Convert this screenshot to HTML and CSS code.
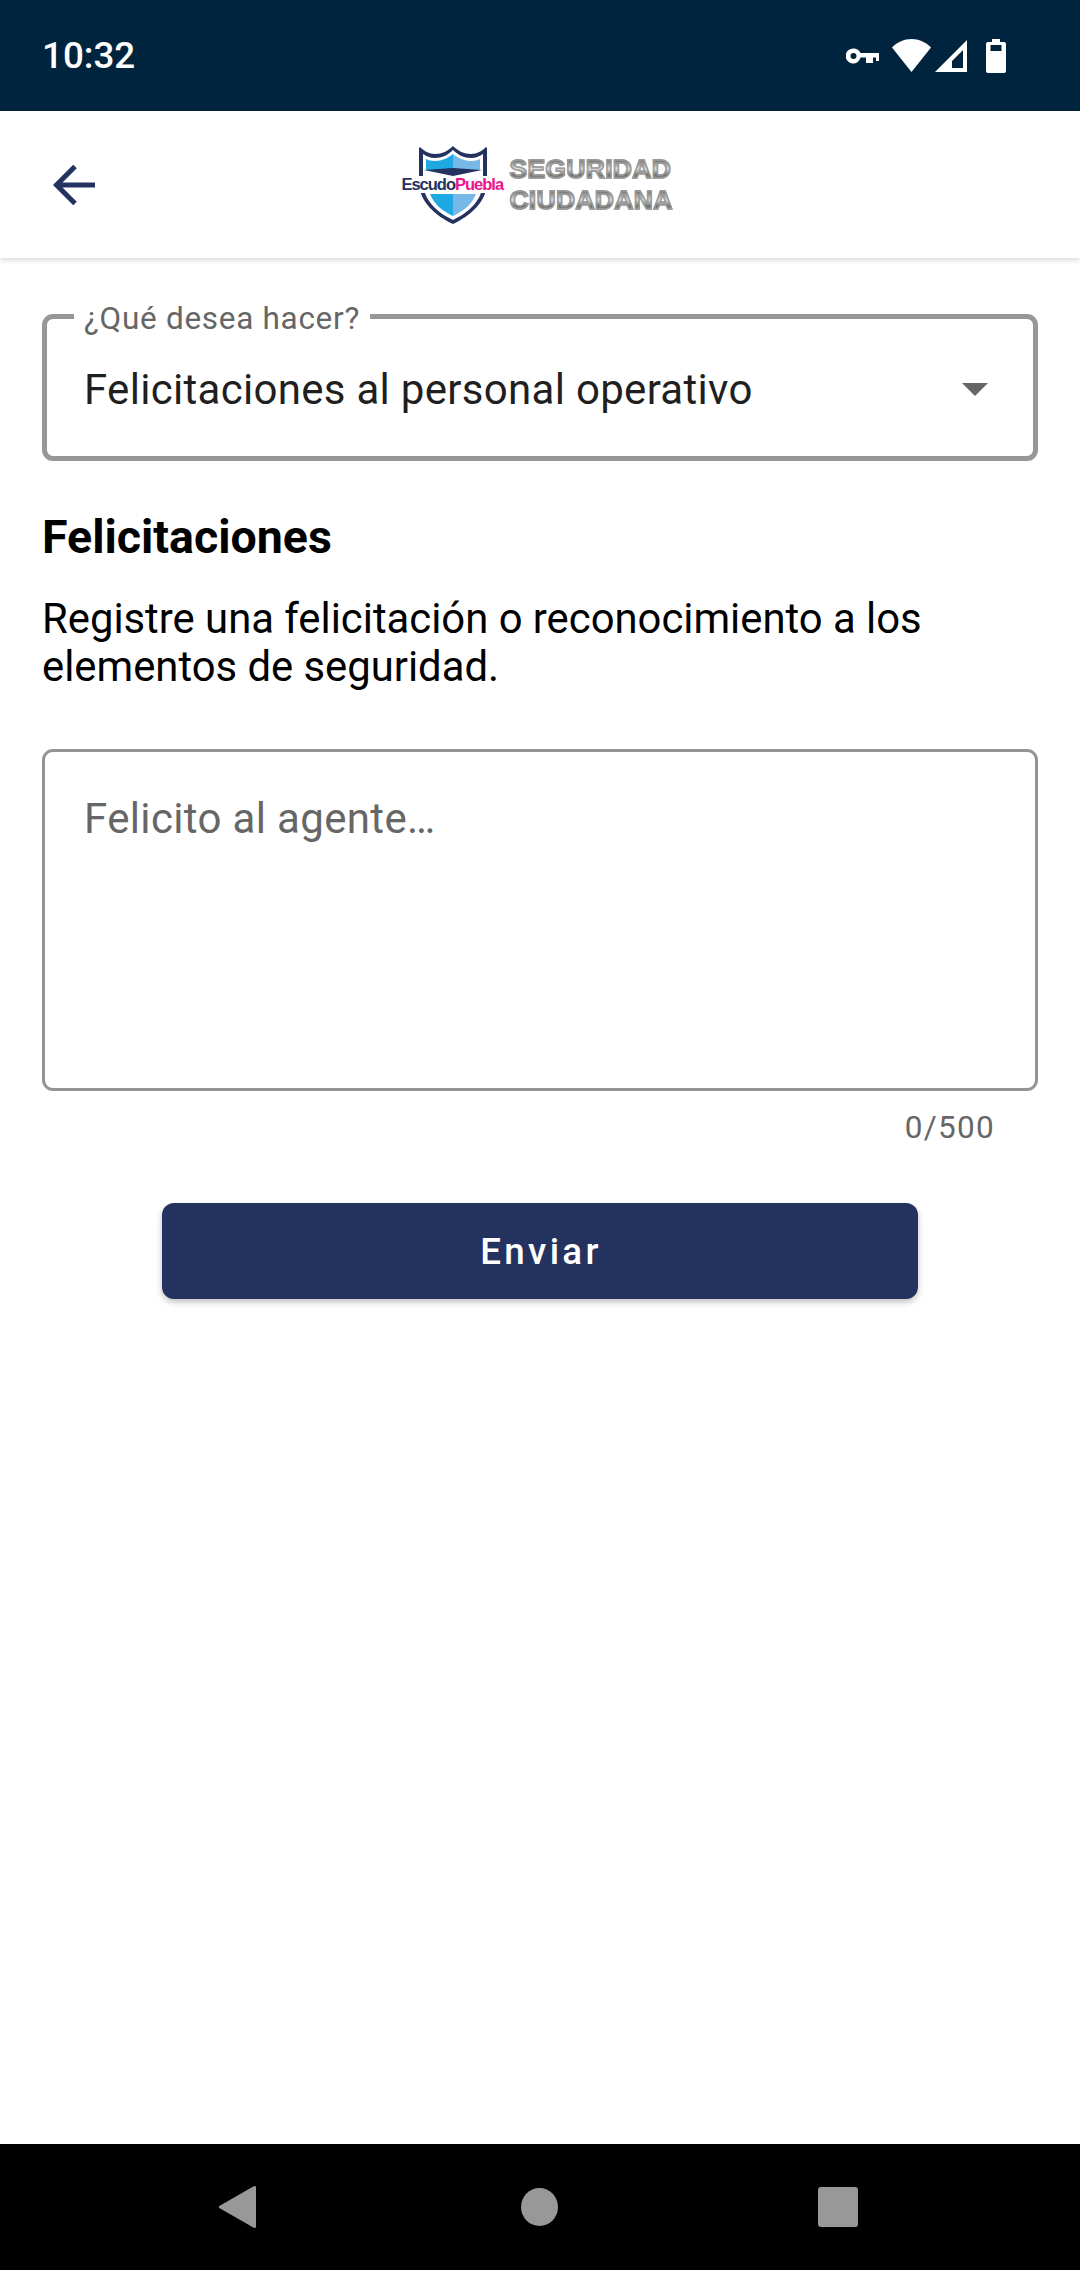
FILE: index.html

```html
<!DOCTYPE html>
<html lang="es">
<head>
  <meta charset="UTF-8" />
  <meta name="viewport" content="width=device-width, initial-scale=1" />
  <title>Seguridad Ciudadana</title>
  <link rel="stylesheet" href="styles.css">
</head>
<body>
  <div class="status-bar">
    <span class="clock">10:32</span>
    <div class="status-icons">
      <svg class="icon-key" viewBox="0 0 33 16" width="33" height="16">
        <path fill="#fff" fill-rule="evenodd" d="M7.500 0.500a7.500 7.500 0 0 1 7 4.500H33v8h-3V9.500h-3V15h-7V9.500h-5.500a7.500 7.500 0 1 1-7-9zM7.500 5a3 3 0 1 0 0 6 3 3 0 0 0 0-6z"/>
      </svg>
      <svg class="icon-wifi" viewBox="0 0 39 33" width="39" height="33">
        <path fill="#fff" d="M19.500 33 0 8.500C5.500 3 12 0 19.500 0S33.500 3 39 8.500z"/>
      </svg>
      <svg class="icon-signal" viewBox="0 0 32 32" width="32" height="32">
        <path fill="#fff" fill-rule="evenodd" d="M32 0v32H0zM28 10 17 21v7h11z"/>
      </svg>
      <svg class="icon-battery" viewBox="0 0 20 34" width="20" height="34">
        <path fill="#fff" fill-rule="evenodd" d="M6 0h8v3h4a2 2 0 0 1 2 2v27a2 2 0 0 1-2 2H2a2 2 0 0 1-2-2V5a2 2 0 0 1 2-2h4zM4.500 6v6h11V6z"/>
      </svg>
    </div>
  </div>

  <header class="app-bar">
    <svg class="back-arrow" viewBox="0 0 43 42" width="43" height="42">
      <path fill="none" stroke="#243260" stroke-width="5" d="M43 21H5M23 2.500 4.500 21 23 39.500"/>
    </svg>
    <div class="logo">
      <div class="shield">
        <svg viewBox="0 0 70 78" width="70" height="78">
          <path fill="#243260" d="M35 0C30 5 24 8 17 8 11 8 6 5 2 1L1 2V36C1 56 18 70 35 78 52 70 69 56 69 36V2L68 1C64 5 59 8 53 8 46 8 40 5 35 0Z"/>
          <path fill="#fff" d="M35 4C30 9 24 12 17 12 12 12 8 10 5 8V36C5 54 20 67 35 74 50 67 65 54 65 36V8C62 10 58 12 53 12 46 12 40 9 35 4Z"/>
          <path fill="#1fa8e2" d="M35 8C30 12 24 15 17 15 13 15 10 14 8 13V24L35 27Z"/>
          <path fill="#76b9e8" d="M35 8C40 12 46 15 53 15 57 15 60 14 62 13V24L35 27Z"/>
          <path fill="#243260" d="M6 24 35 22 64 24 35 30Z"/>
          <path fill="#1fa8e2" d="M12 48H35V70C24 65 16 58 12 48Z"/>
          <path fill="#76b9e8" d="M58 48H35V70C46 65 54 58 58 48Z"/>
        </svg>
        <div class="shield-name"><span class="name-blue">Escudo</span><span class="name-pink">Puebla</span></div>
      </div>
      <div class="logo-words">
        <span>SEGURIDAD</span>
        <span>CIUDADANA</span>
      </div>
    </div>
  </header>

  <main class="content">
    <div class="select-box">
      <span class="select-label">¿Qué desea hacer?</span>
      <span class="select-value">Felicitaciones al personal operativo</span>
      <span class="select-caret"></span>
    </div>

    <h2 class="section-title">Felicitaciones</h2>
    <p class="section-text">Registre una felicitación o reconocimiento a los elementos de seguridad.</p>

    <div class="text-area">Felicito al agente…</div>
    <div class="counter">0/500</div>

    <button class="send-btn">Enviar</button>
  </main>

  <nav class="nav-bar">
    <svg viewBox="0 0 37 42" width="37" height="42">
      <path fill="#989898" stroke="#989898" stroke-width="3" stroke-linejoin="round" d="M35.500 1.500v39L1.500 21z"/>
    </svg>
    <span class="nav-home"></span>
    <span class="nav-recent"></span>
  </nav>
</body>
</html>
```

FILE: styles.css

```css
* {
  box-sizing: border-box;
}
html, body {
  margin: 0;
  padding: 0;
}
body {
  width: 1080px;
  height: 2270px;
  display: flex;
  flex-direction: column;
  font-family: Roboto, "Liberation Sans", sans-serif;
  background: #fff;
  color: #000;
  overflow: hidden;
}

/* status bar */
.status-bar {
  height: 111px;
  background: #00243d;
  color: #fff;
  display: flex;
  align-items: center;
  justify-content: space-between;
  padding: 0 74px 0 42px;
}
.clock {
  font-size: 36.750px;
  font-weight: 500;
}
.status-icons {
  display: flex;
  align-items: center;
}
.icon-key {
  margin: 1px 13px 0 0;
}
.icon-wifi {
  margin-right: 4px;
}
.icon-battery {
  margin-left: 19px;
}

/* app bar */
.app-bar {
  height: 147px;
  position: relative;
  display: flex;
  align-items: center;
  justify-content: center;
  background: #fff;
  box-shadow: 0 2px 5px rgba(0, 0, 0, 0.16);
}
.back-arrow {
  position: absolute;
  left: 52px;
  top: 53px;
}
.logo {
  display: flex;
  align-items: center;
  gap: 4px;
  margin-left: -6px;
}
.shield {
  position: relative;
  width: 104px;
  height: 78px;
  display: flex;
  justify-content: center;
}
.shield-name {
  position: absolute;
  left: 0;
  top: 30px;
  width: 104px;
  height: 17px;
  background: #fff;
  font-family: "Liberation Sans", sans-serif;
  font-size: 16.500px;
  line-height: 17px;
  font-weight: 700;
  letter-spacing: -1px;
  white-space: nowrap;
}
.name-blue {
  color: #243260;
}
.name-pink {
  color: #ec148c;
}
.logo-words {
  display: flex;
  flex-direction: column;
  font-family: "Liberation Sans", sans-serif;
  font-weight: 700;
  font-size: 26.500px;
  line-height: 31px;
  letter-spacing: 0.3px;
  -webkit-text-stroke: 1.500px #9a9a9a;
}
.logo-words span {
  background: linear-gradient(#6d6d6d 20%, #e0e0e0 48%, #6a6a6a 68%, #a0a0a0 82%);
  -webkit-background-clip: text;
  background-clip: text;
  color: transparent;
}

/* form */
.content {
  flex: 1;
  display: flex;
  flex-direction: column;
  padding: 56px 42px 0;
}
.select-box {
  position: relative;
  height: 147px;
  border: 5px solid #979797;
  border-radius: 11px;
  display: flex;
  align-items: center;
  justify-content: space-between;
  padding: 4px 45px 0 37px;
}
.select-label {
  position: absolute;
  left: 27px;
  top: -17px;
  padding: 0 10px;
  background: #fff;
  color: #666;
  font-size: 31.500px;
  line-height: 34px;
  letter-spacing: 0.7px;
}
.select-value {
  font-size: 42px;
  color: #1f1f1f;
  letter-spacing: 0.3px;
}
.select-caret {
  width: 0;
  height: 0;
  border-left: 13px solid transparent;
  border-right: 13px solid transparent;
  border-top: 13px solid #666;
}
.section-title {
  margin: 50px 0 0;
  font-size: 46.500px;
  line-height: 52px;
  font-weight: 700;
}
.section-text {
  margin: 32px 0 0;
  font-size: 41.800px;
  line-height: 48px;
}
.text-area {
  margin-top: 58px;
  height: 342px;
  border: 3px solid #949494;
  border-radius: 11px;
  padding: 43px 39px 0;
  color: #666;
  font-size: 42px;
  line-height: 48px;
  letter-spacing: 0.35px;
}
.counter {
  margin-top: 19px;
  padding-right: 43px;
  text-align: right;
  color: #666;
  font-size: 31.500px;
  line-height: 36px;
  letter-spacing: 1.300px;
}
.send-btn {
  align-self: center;
  margin-top: 57px;
  padding-left: 8px;
  width: 756px;
  height: 96px;
  border: 0;
  border-radius: 12px;
  background: #243260;
  color: #fff;
  font-family: Roboto, sans-serif;
  font-size: 36.750px;
  font-weight: 500;
  letter-spacing: 3.300px;
  box-shadow: 0 3px 6px rgba(0, 0, 0, 0.25);
}

/* bottom navigation */
.nav-bar {
  height: 126px;
  background: #000;
  display: flex;
  align-items: center;
  justify-content: center;
  gap: 265px;
  padding-right: 3px;
}
.nav-home {
  width: 37px;
  height: 38px;
  border-radius: 50%;
  background: #989898;
}
.nav-recent {
  width: 40px;
  height: 40px;
  margin-left: -5px;
  border-radius: 3px;
  background: #989898;
}
```
